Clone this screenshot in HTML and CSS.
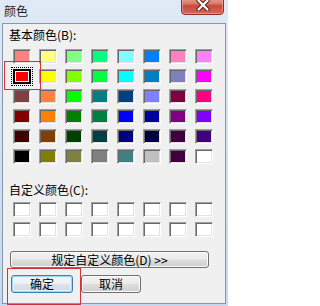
FILE: index.html
```html
<!DOCTYPE html>
<html lang="zh-CN">
<head>
<meta charset="utf-8">
<title>颜色</title>
<link rel="stylesheet" href="styles.css">
</head>
<body>
<div class="window">
  <div class="titlebar">
    <span class="title">颜色</span>
    <div class="close">
      <svg width="14" height="11" viewBox="0 0 14 11">
        <path d="M2.5 0.5 L11.5 9.5 M11.5 0.5 L2.5 9.5" stroke="#5a1d18" stroke-width="4.2" stroke-linecap="round" fill="none"/>
        <path d="M2.5 0.5 L11.5 9.5 M11.5 0.5 L2.5 9.5" stroke="#ffffff" stroke-width="2.2" stroke-linecap="round" fill="none"/>
      </svg>
    </div>
  </div>
  <div class="client">
    <div class="label">基本颜色(B):</div>
    <div class="grid basic">
      <div class="sw" style="background:#ff8080"></div>
      <div class="sw" style="background:#ffff80"></div>
      <div class="sw" style="background:#80ff80"></div>
      <div class="sw" style="background:#00ff80"></div>
      <div class="sw" style="background:#80ffff"></div>
      <div class="sw" style="background:#0080ff"></div>
      <div class="sw" style="background:#ff80c0"></div>
      <div class="sw" style="background:#ff80ff"></div>

      <div class="sw sel" style="background:#ff0000"></div>
      <div class="sw" style="background:#ffff00"></div>
      <div class="sw" style="background:#80ff00"></div>
      <div class="sw" style="background:#00ff40"></div>
      <div class="sw" style="background:#00ffff"></div>
      <div class="sw" style="background:#0080c0"></div>
      <div class="sw" style="background:#8080c0"></div>
      <div class="sw" style="background:#ff00ff"></div>

      <div class="sw" style="background:#804040"></div>
      <div class="sw" style="background:#ff8040"></div>
      <div class="sw" style="background:#00ff00"></div>
      <div class="sw" style="background:#008080"></div>
      <div class="sw" style="background:#004080"></div>
      <div class="sw" style="background:#8080ff"></div>
      <div class="sw" style="background:#800040"></div>
      <div class="sw" style="background:#ff0080"></div>

      <div class="sw" style="background:#800000"></div>
      <div class="sw" style="background:#ff8000"></div>
      <div class="sw" style="background:#008000"></div>
      <div class="sw" style="background:#008040"></div>
      <div class="sw" style="background:#0000ff"></div>
      <div class="sw" style="background:#0000a0"></div>
      <div class="sw" style="background:#800080"></div>
      <div class="sw" style="background:#8000ff"></div>

      <div class="sw" style="background:#400000"></div>
      <div class="sw" style="background:#804000"></div>
      <div class="sw" style="background:#004000"></div>
      <div class="sw" style="background:#004040"></div>
      <div class="sw" style="background:#000080"></div>
      <div class="sw" style="background:#000040"></div>
      <div class="sw" style="background:#400040"></div>
      <div class="sw" style="background:#400080"></div>

      <div class="sw" style="background:#000000"></div>
      <div class="sw" style="background:#808000"></div>
      <div class="sw" style="background:#808040"></div>
      <div class="sw" style="background:#808080"></div>
      <div class="sw" style="background:#408080"></div>
      <div class="sw" style="background:#c0c0c0"></div>
      <div class="sw" style="background:#400040"></div>
      <div class="sw" style="background:#ffffff"></div>
    </div>
    <div class="label custom-label">自定义颜色(C):</div>
    <div class="grid custom">
      <div class="sw"></div><div class="sw"></div><div class="sw"></div><div class="sw"></div>
      <div class="sw"></div><div class="sw"></div><div class="sw"></div><div class="sw"></div>
      <div class="sw"></div><div class="sw"></div><div class="sw"></div><div class="sw"></div>
      <div class="sw"></div><div class="sw"></div><div class="sw"></div><div class="sw"></div>
    </div>
    <button class="btn wide">规定自定义颜色(D) &gt;&gt;</button>
    <div class="actions">
      <button class="btn ok">确定</button>
      <button class="btn cancel">取消</button>
    </div>
  </div>
  <div class="mark mark-sel"></div>
  <div class="mark mark-ok"></div>
</div>
</body>
</html>
```
FILE: styles.css
```css
html, body {
  margin: 0;
  padding: 0;
  background: #ffffff;
}

body {
  font-family: "Noto Sans CJK SC", "Noto Sans", sans-serif;
  font-size: 12px;
  color: #000;
}

.window {
  position: relative;
  width: 228px;
  height: 306px;
  box-sizing: border-box;
  padding: 0 2px 2px 2px;
  background: linear-gradient(180deg, #e0eaf6 0%, #d4e2f2 40%, #c6d9ee 100%);
  display: flex;
  flex-direction: column;
  overflow: hidden;
}

.titlebar {
  height: 23px;
  display: flex;
  justify-content: space-between;
  align-items: flex-start;
  flex: none;
}

.title {
  margin: 4px 0 0 2px;
  font-size: 12px;
  line-height: 14px;
  color: #1e1e1e;
}

.close {
  margin: -5px 2px 0 0;
  width: 43px;
  height: 20px;
  box-sizing: border-box;
  border: 1px solid #8b2f27;
  border-radius: 0 0 4px 4px;
  background: linear-gradient(180deg, #e7a596 0%, #db7f70 40%, #c9493b 55%, #d4695b 100%);
  box-shadow: inset 0 0 0 1px rgba(255, 200, 190, 0.45);
  display: flex;
  justify-content: center;
  align-items: flex-start;
  padding-top: 4px;
}

.close svg {
  display: block;
}

.client {
  flex: 1;
  box-sizing: border-box;
  border: 1px solid #8597ae;
  background: #f0f0f0;
  display: flex;
  flex-direction: column;
  align-items: flex-start;
}

.label {
  margin: 4px 0 0 6px;
  line-height: 14px;
  white-space: nowrap;
}

.custom-label {
  margin-top: 19px;
}

.grid {
  display: grid;
  grid-template-columns: repeat(8, 18px);
  grid-auto-rows: 15px;
  column-gap: 8px;
  row-gap: 5px;
  margin-left: 10px;
}

.basic {
  margin-top: 7px;
}

.custom {
  margin-top: 5px;
}

.sw {
  box-sizing: border-box;
  width: 18px;
  height: 15px;
  background: #ffffff;
  border-top: 1px solid #a0a0a0;
  border-left: 1px solid #a0a0a0;
  border-right: 1px solid #ffffff;
  border-bottom: 1px solid #ffffff;
  box-shadow: inset 1px 1px 0 #696969, inset -1px -1px 0 #e3e3e3;
}

.sw.sel {
  border: 2px solid #000;
  box-shadow: inset 0 0 0 1px #ffffff;
  outline: 1px dotted #000;
  outline-offset: 1px;
}

.btn {
  font-family: "Noto Sans CJK SC", "Noto Sans", sans-serif;
  font-size: 12px;
  line-height: 14px;
  color: #000;
  box-sizing: border-box;
  padding: 0;
  border: 1px solid #707070;
  border-radius: 3px;
  background: linear-gradient(180deg, #f2f2f2 0%, #ebebeb 48%, #dddddd 52%, #cfcfcf 100%);
  box-shadow: inset 0 0 0 1px #fbfbfb;
  white-space: nowrap;
}

.wide {
  margin: 14px 0 0 7px;
  width: 199px;
  height: 17px;
}

.actions {
  display: flex;
  gap: 8px;
  margin: 7px 0 0 8px;
}

.ok, .cancel {
  width: 62px;
  height: 18px;
}

.cancel {
  width: 60px;
}

.ok {
  border-color: #3c7fb1;
  box-shadow: inset 0 0 0 1px #9fd6f3, inset 0 0 0 2px #e4f3fb;
  background: linear-gradient(180deg, #f4f8fb 0%, #eaf0f4 48%, #dde3e8 52%, #d2d9de 100%);
}

.mark {
  position: absolute;
  border: 1px solid #d2333a;
  box-sizing: border-box;
  pointer-events: none;
}

.mark-sel {
  left: 4px;
  top: 61px;
  width: 37px;
  height: 29px;
}

.mark-ok {
  left: 7px;
  top: 268px;
  width: 74px;
  height: 37px;
}
```
